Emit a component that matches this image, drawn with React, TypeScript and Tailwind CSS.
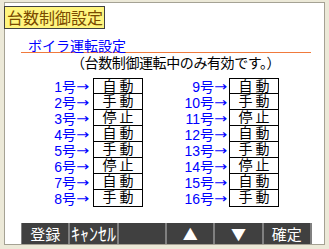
import React from "react";

const jp = { fontFamily: '"Noto Sans CJK JP", "Noto Sans", sans-serif' };
// 行の高さが詰まっているので、行内は行高の小さいフォントを先に置く
const rowFont = { fontFamily: '"Liberation Sans", "Noto Sans CJK JP", sans-serif' };
const arrowFont = { fontFamily: '"DejaVu Sans", sans-serif' };

// 左列 1〜8号、右列 9〜16号
const modes = ["自動", "手動", "停止", "自動", "手動", "停止", "自動", "手動"];

function Column({ start, labelW }: { start: number; labelW: string }) {
  return (
    <div className="flex" style={rowFont}>
      <div className={`flex flex-col pt-px ${labelW}`}>
        {modes.map((_, i) => (
          <div
            key={i}
            className="h-[16px] flex items-center justify-end text-[14px] leading-[16px] text-[#0000ff] whitespace-nowrap"
          >
            {start + i}号
            <span className="w-[14px] flex items-center text-[13px] leading-[16px]" style={arrowFont}>
              <span className="inline-block origin-left scale-x-[1.2]">→</span>
            </span>
          </div>
        ))}
      </div>
      <div className="w-[50px] border border-black flex flex-col divide-y divide-black">
        {modes.map((m, i) => (
          <div
            key={i}
            className="h-[16px] first:h-[15px] text-center text-[14px] leading-[15px] text-black tracking-[3px] pl-[3px]"
          >
            {m}
          </div>
        ))}
      </div>
    </div>
  );
}

export default function App() {
  const buttons = [
    { t: "登録", c: "text-[15px]" },
    { t: "ｷｬﾝｾﾙ", c: "text-[18px]" },
    { t: "", c: "" },
    { t: "▲", c: "text-[15px]" },
    { t: "▼", c: "text-[15px]" },
    { t: "確定", c: "text-[15px]" },
  ];

  return (
    <div className="w-[329px] h-[249px] bg-[#ece9d8] pt-[2px] pl-[4px] pr-[4px] pb-[4px]" style={jp}>
      <div className="h-full bg-white border border-[#a5a294] flex flex-col">
        {/* タイトル */}
        <div className="mt-[3px] w-[101px] h-[23px] border border-[#404040] bg-[#fff57e] text-[#7a4a00] text-[16px] leading-[21px] pl-[2px] whitespace-nowrap -ml-px">
          台数制御設定
        </div>

        {/* サブタイトル */}
        <div className="mt-[9px] ml-[16px] w-[290px] border-b-[1.5px] border-[#f07a3c] pl-[7px] text-[14px] leading-[14px] text-[#0000ff]">
          ボイラ運転設定
        </div>
        <div className="ml-[66px] mt-[2px] text-[14px] leading-[15px] tracking-[-0.4px] text-black whitespace-nowrap">
          （台数制御運転中のみ有効です。）
        </div>

        {/* 号機ごとの運転モード */}
        <div className="mt-[8px] ml-[36px] flex gap-[34px]">
          <Column start={1} labelW="w-[52px] pr-[3px]" />
          <Column start={9} labelW="w-[52px] pr-[1px]" />
        </div>

        {/* ボタンバー */}
        <div className="mt-auto ml-[16px] w-[291px] h-[21px] flex border-l border-[#7f7f7f]">
          {buttons.map((b, i) => (
            <div
              key={i}
              className={`flex-1 bg-[#404040] border-r-2 border-[#808080] flex items-center justify-center text-white leading-[21px] whitespace-nowrap ${b.c}`}
            >
              {b.t}
            </div>
          ))}
        </div>
      </div>
    </div>
  );
}
